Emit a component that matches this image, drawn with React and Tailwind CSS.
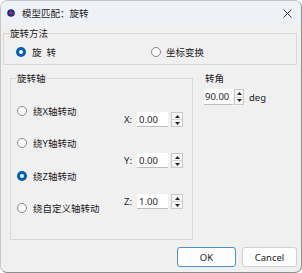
import React from "react";

function Radio({ checked }) {
  return checked ? (
    <span className="w-[10px] h-[10px] rounded-full bg-[#005fb8] flex items-center justify-center shrink-0">
      <span className="w-[4px] h-[4px] rounded-full bg-white" />
    </span>
  ) : (
    <span className="w-[10px] h-[10px] rounded-full border border-[#868686] bg-[#fbfbfb] shrink-0" />
  );
}

function Arrows({ wide }) {
  return (
    <div className={wide ? "flex flex-col w-[12px] h-full border border-[#c9c9c9] bg-[#f7f7f7]" : "flex flex-col w-[10px] h-full border border-[#c9c9c9] bg-[#f7f7f7]"}>
      <div className="flex-1 flex items-center justify-center border-b border-[#d6d6d6]">
        <svg width="5" height="3" viewBox="0 0 5 3"><path d="M0 3 L2.5 0 L5 3 Z" fill="#222" /></svg>
      </div>
      <div className="flex-1 flex items-center justify-center">
        <svg width="5" height="3" viewBox="0 0 5 3"><path d="M0 0 L2.5 3 L5 0 Z" fill="#222" /></svg>
      </div>
    </div>
  );
}

function Spin({ label, value }) {
  return (
    <div className="flex items-center h-[15px]">
      <span className="w-[12px] text-right">{label}</span>
      <div className="ml-[5px] w-[31px] h-full bg-white border-b border-[#bdbdbd] pl-[2px] flex items-center">{value}</div>
      <div className="ml-[3px] h-full"><Arrows wide /></div>
    </div>
  );
}

export default function App() {
  return (
    <div className="w-[302px] h-[273px] bg-white font-['Noto_Sans','Noto_Sans_CJK_SC',sans-serif] text-[9.5px] leading-[13px] text-[#1b1b1b]">
      <div className="w-[302px] h-[273px] flex flex-col bg-[#f0f0f0] border border-[#c6c6c6] border-r-[#8f8f8f] border-b-[#8f8f8f] rounded-[7px] overflow-hidden">
        {/* title bar */}
        <div className="h-[24px] shrink-0 bg-[#eef2f7] flex items-center pl-[6px] pr-[9px]">
          <svg width="8" height="8" viewBox="0 0 8 8" className="shrink-0">
            <circle cx="4" cy="4" r="3.8" fill="#1c2f8a" />
            <circle cx="4" cy="4" r="1.6" fill="#d9232e" />
          </svg>
          <span className="ml-[7px] text-[9.5px]">模型匹配：旋转</span>
          <div className="flex-1" />
          <svg width="9" height="9" viewBox="0 0 9 9">
            <path d="M0.5 0.5 L8.5 8.5 M8.5 0.5 L0.5 8.5" stroke="#222" strokeWidth="0.9" />
          </svg>
        </div>

        {/* group 1 */}
        <fieldset className="mt-[2px] ml-[2px] w-[294px] border border-[#d8d8d8] shrink-0">
          <legend className="ml-[6px]">旋转方法</legend>
          <div className="flex items-center h-[14px] mt-[5px] mb-[5px] pl-[12px]">
            <div className="w-[135px] flex items-center">
              <Radio checked />
              <span className="ml-[6px] whitespace-pre">旋  转</span>
            </div>
            <div className="flex items-center">
              <Radio />
              <span className="ml-[5px]">坐标变换</span>
            </div>
          </div>
        </fieldset>

        {/* middle */}
        <div className="flex mt-[7px] shrink-0">
          <fieldset className="ml-[9px] w-[183px] h-[168px] border border-[#d8d8d8]">
            <legend className="ml-[6px]">旋转轴</legend>
            <div className="flex">
              <div className="w-[109px] pl-[6px] pt-[19px] flex flex-col">
                <div className="flex items-center h-[14px]"><Radio /><span className="ml-[6px]">绕X轴转动</span></div>
                <div className="flex items-center h-[14px] mt-[18px]"><Radio /><span className="ml-[6px]">绕Y轴转动</span></div>
                <div className="flex items-center h-[14px] mt-[19px]"><Radio checked /><span className="ml-[6px]">绕Z轴转动</span></div>
                <div className="flex items-center h-[14px] mt-[18px]"><Radio /><span className="ml-[6px]">绕自定义轴转动</span></div>
              </div>
              <div className="pt-[27px] flex flex-col">
                <Spin label="X:" value="0.00" />
                <div className="mt-[26px]"><Spin label="Y:" value="0.00" /></div>
                <div className="mt-[26px]"><Spin label="Z:" value="1.00" /></div>
              </div>
            </div>
          </fieldset>
          <div className="ml-[11px] flex flex-col">
            <span className="pl-[1px]">转角</span>
            <div className="mt-[4px] flex items-center h-[16px]">
              <div className="w-[29px] h-full bg-white border-b border-[#bdbdbd] pl-[1px] flex items-center">90.00</div>
              <div className="ml-[1px] h-full"><Arrows /></div>
              <span className="ml-[5px]">deg</span>
            </div>
          </div>
        </div>

        {/* buttons */}
        <div className="flex justify-end mt-[7px] pr-[4px] gap-[6px]">
          <button className="w-[59px] h-[20px] bg-[#fdfdfd] border border-[#4f8fd0] rounded-[3px] flex items-center justify-center">OK</button>
          <button className="w-[55px] h-[20px] bg-[#fdfdfd] border border-[#d0d0d0] rounded-[3px] flex items-center justify-center">Cancel</button>
        </div>
      </div>
    </div>
  );
}
